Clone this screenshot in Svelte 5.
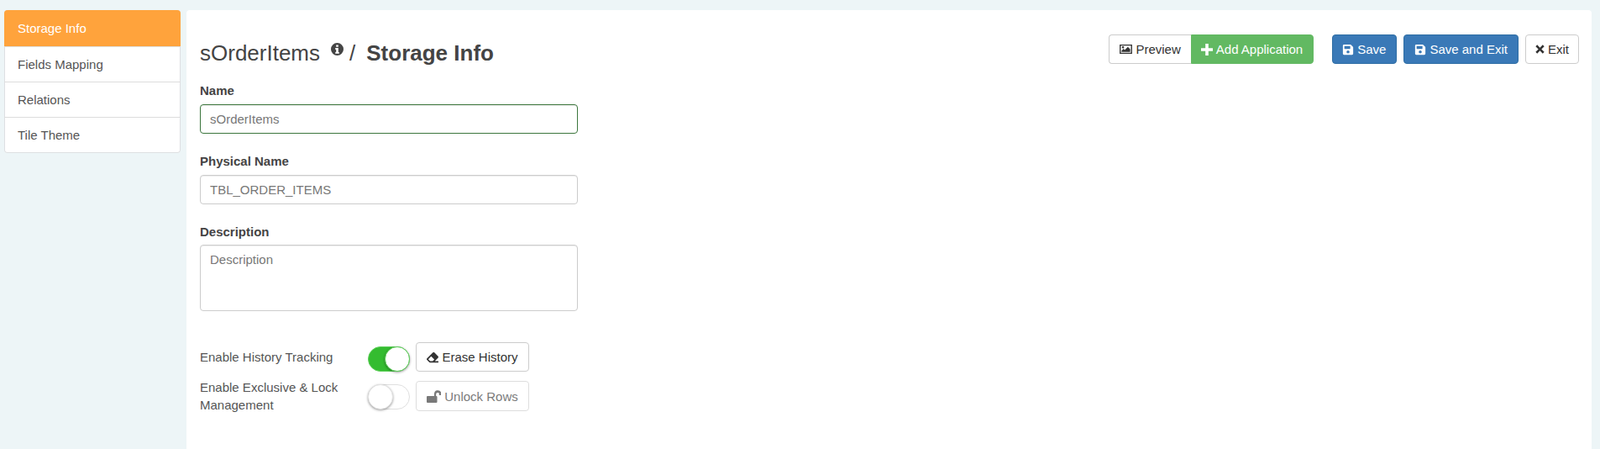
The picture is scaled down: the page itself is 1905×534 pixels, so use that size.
<script>
  const tabs = ['Storage Info', 'Fields Mapping', 'Relations', 'Tile Theme'];
  const save = 'M433.941 129.941l-83.882-83.882A48 48 0 0 0 316.118 32H48C21.49 32 0 53.49 0 80v352c0 26.51 21.49 48 48 48h352c26.51 0 48-21.49 48-48V163.882a48 48 0 0 0-14.059-33.941zM224 416c-35.346 0-64-28.654-64-64 0-35.346 28.654-64 64-64s64 28.654 64 64c0 35.346-28.654 64-64 64zm96-304.52V212c0 6.627-5.373 12-12 12H76c-6.627 0-12-5.373-12-12V108c0-6.627 5.373-12 12-12h228.52c3.183 0 6.235 1.264 8.485 3.515l3.48 3.48A11.996 11.996 0 0 1 320 111.48z';
</script>

<div class="page">
  <nav class="side">
    {#each tabs as t, i}
      <div class="tab" class:active={i === 0}>{t}</div>
    {/each}
  </nav>
  <main class="main">
    <header class="head">
      <h1 class="title">
        <span>sOrderItems</span>
        <svg class="info" viewBox="0 0 16 16"><path fill-rule="evenodd" d="M8 0a8 8 0 1 0 0 16A8 8 0 0 0 8 0zM6.600 2.600h2.800v2.400H6.600zM5.600 6.400h3.800v5.200h1v2H5.600v-2h1V8.400h-1z"/></svg>
        <span class="sl">/</span>
        <b>Storage Info</b>
      </h1>
      <div class="actions">
        <div class="group">
          <button class="btn left">
            <svg class="ic pic" viewBox="0 0 16 14"><path fill-rule="evenodd" d="M0 1h16v12H0zM1.500 2.500v9h13v-9zM2.500 10.500V9L5 6.500l1.500 1.500L10.500 4l3 3v3.500zM4.300 6a1.400 1.400 0 1 0 0-2.800 1.400 1.400 0 0 0 0 2.800z"/></svg>
            Preview
          </button>
          <button class="btn green right">
            <svg class="ic plus" viewBox="0 0 14 14"><path d="M5.200 0h3.600v5.200H14v3.600H8.800V14H5.200V8.800H0V5.200h5.200z"/></svg>
            Add Application
          </button>
        </div>
        <button class="btn blue sp1"><svg class="ic" viewBox="0 0 448 512"><path d={save}/></svg> Save</button>
        <button class="btn blue"><svg class="ic" viewBox="0 0 448 512"><path d={save}/></svg> Save and Exit</button>
        <button class="btn exit"><svg class="ic x" viewBox="0 0 12 12"><path d="M2.400.4 6 4 9.600.4l2 2L8 6l3.600 3.600-2 2L6 8l-3.600 3.600-2-2L4 6 .4 2.400z"/></svg> Exit</button>
      </div>
    </header>

    <section class="form">
      <div class="field">
        <div class="lbl">Name</div>
        <input class="ctl focus" value="sOrderItems" />
      </div>
      <div class="field">
        <div class="lbl">Physical Name</div>
        <input class="ctl" value="TBL_ORDER_ITEMS" />
      </div>
      <div class="field">
        <div class="lbl tight">Description</div>
        <textarea class="ctl area" placeholder="Description"></textarea>
      </div>

      <div class="opts">
        <div class="opt">
          <div class="optlbl">Enable History Tracking</div>
          <span class="sw on"><i></i></span>
          <button class="btn wide">
            <svg class="ic" viewBox="0 0 512 512"><path d="M497.941 273.941c18.745-18.745 18.745-49.137 0-67.882l-160-160c-18.745-18.745-49.136-18.746-67.883 0l-256 256c-18.745 18.745-18.745 49.137 0 67.882l96 96A48.004 48.004 0 0 0 144 480h356c6.627 0 12-5.373 12-12v-40c0-6.627-5.373-12-12-12H355.883l142.058-142.059zm-302.627-62.627l137.373 137.373L265.373 416H150.628l-80-80 124.686-124.686z"/></svg>
            Erase History
          </button>
        </div>
        <div class="opt second">
          <div class="optlbl">Enable Exclusive &amp; Lock Management</div>
          <span class="sw"><i></i></span>
          <button class="btn wide dis">
            <svg class="ic lock" viewBox="0 0 17 15"><path d="M1 7h8V4.500a4.300 4.300 0 0 1 8-2.200V6h-2.200V3.800A2 2 0 0 0 11.200 4.500V7h.3a1 1 0 0 1 1 1v6a1 1 0 0 1-1 1H1a1 1 0 0 1-1-1V8a1 1 0 0 1 1-1z"/></svg>
            Unlock Rows
          </button>
        </div>
      </div>
    </section>
  </main>
</div>

<style>
  :global(body) { margin: 0; background: #edf5f7; font-family: "Liberation Sans", Arial, sans-serif; font-size: 15px; color: #333; }
  .page { display: flex; align-items: flex-start; gap: 7px; padding: 12px 10px 0 5px; height: 522px; overflow: hidden; }
  .side { width: 210px; flex: none; background: #fff; border-radius: 4px; box-shadow: 0 0 0 1px #dddfe2 inset; overflow: hidden; padding-bottom: 1px; }
  .tab { height: 42px; box-sizing: border-box; padding: 0 16px; display: flex; align-items: center; color: #555; border-top: 1px solid #ddd; }
  .tab:first-child { border-top: 0; }
  .active { background: #ffa33c; color: #fff; height: 43px; }
  .main { flex: 1; height: 522px; background: #fff; border-radius: 4px 4px 0 0; padding: 29px 15px 0 16px; box-sizing: border-box; }
  .head { display: flex; justify-content: space-between; align-items: flex-start; height: 40px; }
  .title { margin: 8px 0 0; font-size: 26px; font-weight: 400; color: #444; display: flex; align-items: flex-start; line-height: 29px; white-space: nowrap; }
  .title b { font-weight: 700; }
  .info { width: 15px; height: 15px; fill: #444; margin: 2px 0 0 13px; }
  .sl { margin: 0 13px 0 7px; }
  .actions { display: flex; align-items: flex-start; gap: 8px; }
  .group { display: flex; }
  .btn { font: inherit; height: 35px; box-sizing: border-box; padding: 0 12px; border: 1px solid #ccc; border-radius: 4px; background: #fff; color: #333; display: inline-flex; align-items: center; gap: 4px; white-space: nowrap; }
  .left { border-radius: 4px 0 0 4px; border-right: 0; }
  .right { border-radius: 0 4px 4px 0; padding: 0 12px 0 11px; }
  .green { background: #62b962; border-color: #62b962; color: #fff; }
  .blue { background: #3a79b7; border-color: #2e6da4; color: #fff; }
  .sp1 { margin-left: 14px; padding: 0 12px 0 11px; }
  .exit { padding: 0 11px; }
  .ic { width: 14px; height: 14px; fill: currentColor; flex: none; }
  .pic { width: 15px; height: 13px; }
  .x { width: 11px; height: 11px; }
  .lock { width: 17px; height: 15px; }
  .form { margin-top: 17px; }
  .field { margin-bottom: 23px; }
  .lbl { font-weight: 700; color: #444; line-height: 20px; margin-bottom: 6px; }
  .tight { margin-bottom: 5px; }
  .ctl { display: block; width: 450px; height: 35px; box-sizing: border-box; border: 1px solid #ccc; border-radius: 4px; padding: 6px 11px; font: inherit; color: #777; box-shadow: inset 0 1px 1px rgba(0,0,0,.075); background: #fff; resize: none; }
  .ctl::placeholder { color: #777; opacity: 1; }
  .focus { border-color: #3c763d; }
  .area { height: 79px; padding-top: 8px; }
  .opts { margin-top: 37px; display: flex; flex-direction: column; gap: 11px; }
  .opt { display: flex; align-items: flex-start; width: 400px; }
  .optlbl { width: 200px; line-height: 21px; color: #555; padding-top: 7px; box-sizing: border-box; }
  .second .optlbl { margin-top: -3px; padding-top: 0; }
  .second .btn { height: 36px; }
  .second .sw { margin-top: 4px; }
  .sw { width: 50px; height: 30px; box-sizing: border-box; border-radius: 20px; border: 1px solid #dfdfdf; background: #fff; position: relative; display: block; flex: none; margin: 5px 7px 0 0; }
  .sw i { position: absolute; left: -1px; top: -1px; width: 30px; height: 30px; box-sizing: border-box; border: 1px solid #e4e4e4; border-radius: 50%; background: #fff; box-shadow: 0 1px 3px rgba(0,0,0,.4); }
  .sw.on { background: #34bc30; border-color: #5ccf58; }
  .sw.on i { left: auto; right: -1px; border-color: #5ccf58; }
  .wide { width: 135px; justify-content: center; padding: 0; }
  .dis { opacity: .65; }
</style>
